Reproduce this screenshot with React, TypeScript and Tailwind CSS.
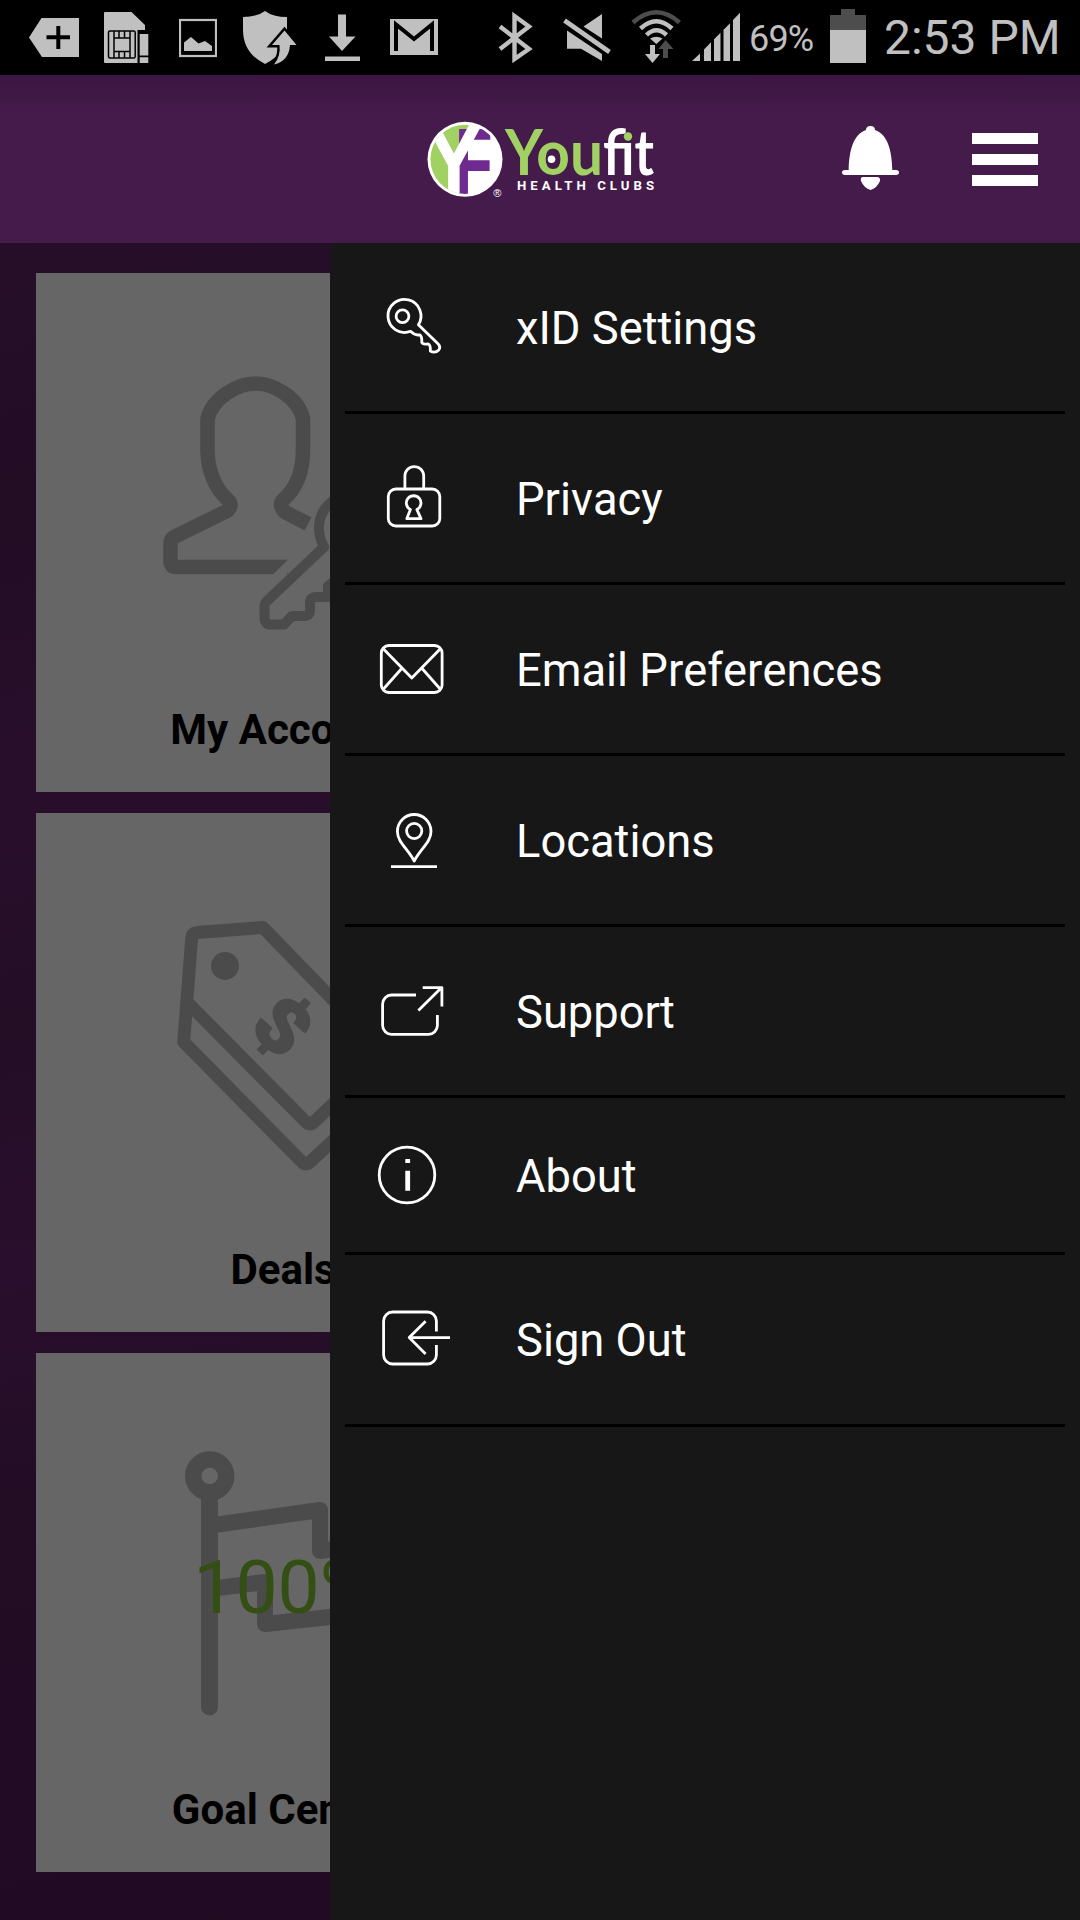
import type { ReactNode } from 'react';

type MenuItem = {
  label: string;
  viewBox: string;
  rowClass: string;
  icon: ReactNode;
};

const menuItems: MenuItem[] = [
  {
    label: 'xID Settings',
    viewBox: '375 243 85 168',
    rowClass: 'h-[171px]',
    icon: (
      <>
        <path d="M418.4 324.8 L438 343.8 Q441 347 438.800 350 Q435 353.800 430.300 351 Q430.800 344.500 428 343.800 Q423 344.800 421.800 342.500 Q422.300 336.500 419.500 334.800 Q415 335.800 410.500 331.300 A16.500 16.500 0 1 1 418.400 324.800 Z" />
        <circle cx="402.500" cy="316.300" r="6.400" />
      </>
    ),
  },
  {
    label: 'Privacy',
    viewBox: '375 414 85 168',
    rowClass: 'h-[171px]',
    icon: (
      <>
        <rect x="388.3" y="489" width="51.5" height="37" rx="7.5" />
        <path d="M404.9 489 V476 A9.4 9.4 0 0 1 423.7 476 V489" />
        <path d="M410.4 509.6 A7.3 7.3 0 1 1 416.9 509.6 L421 518.7 H406.8 Z" />
      </>
    ),
  },
  {
    label: 'Email Preferences',
    viewBox: '375 585 85 168',
    rowClass: 'h-[171px]',
    icon: (
      <>
        <rect x="381.3" y="645.5" width="60.8" height="47" rx="7.5" />
        <path d="M383 648.5 L411.8 678 L440.6 648.5 M383 689.5 L401.5 668.8 M440.6 689.5 L422.3 668.8" />
      </>
    ),
  },
  {
    label: 'Locations',
    viewBox: '375 756 85 168',
    rowClass: 'h-[171px]',
    icon: (
      <>
        <path d="M414.2 861 C408 849 397.4 842 397.4 831.5 A16.8 17 0 0 1 431 831.5 C431 842 420.4 849 414.2 861 Z" />
        <circle cx="414.2" cy="831" r="7.6" />
        <path d="M391 866.7 H437" />
      </>
    ),
  },
  {
    label: 'Support',
    viewBox: '375 927 85 168',
    rowClass: 'h-[171px]',
    icon: (
      <>
        <path d="M416 995 H391.5 A9 9 0 0 0 382.6 1004 V1025.5 A9 9 0 0 0 391.5 1034.4 H428.5 A9 9 0 0 0 437.4 1025.5 V1015" />
        <path d="M418.4 1010.6 L441.6 987.6 M422.7 987.6 H441.9 V1006.5" />
      </>
    ),
  },
  {
    label: 'About',
    viewBox: '375 1098 85 154',
    rowClass: 'h-[157px]',
    icon: (
      <>
        <circle cx="407" cy="1175" r="27.8" />
        <path d="M407.7 1159 V1163 M407.7 1170.8 V1190.8" strokeWidth="4.8" />
      </>
    ),
  },
  {
    label: 'Sign Out',
    viewBox: '375 1255 85 169',
    rowClass: 'h-[172px]',
    icon: (
      <>
        <path d="M436.4 1331.5 V1321 A9 9 0 0 0 427.5 1312 H392.5 A9 9 0 0 0 383.6 1321 V1355 A9 9 0 0 0 392.5 1364 H427.5 A9 9 0 0 0 436.4 1355 V1345" />
        <path d="M450 1337.6 H409 M425.6 1321.3 L409.2 1337.6 L425.6 1353.9" />
      </>
    ),
  },
];

function StatusBar() {
  return (
    <div className="flex h-[75px] items-center bg-black pl-7 text-[#c0c0c0]">
      {/* Notifications */}
      <svg className="h-[75px] w-[52px]" viewBox="28 0 52 75" fill="currentColor">
        <path d="M29 37.5 L41.5 18 H79 V57 H42 Z" />
        <path d="M46.5 37.3 H70 M58.3 26 V49" stroke="#000" strokeWidth="4" />
      </svg>
      <svg className="ml-6 h-[75px] w-[45px]" viewBox="104 0 45 75" fill="currentColor">
        <path d="M105 12 H131.5 L145 25 V30 H137.5 V63 H105 Q104 63 104 62 V13 Q104 12 105 12 Z" />
        <path d="M139.7 34 H148.3 V55.5 H139.7 Z M139.7 57.3 H148.3 V63 H139.7 Z" />
        <g fill="none" stroke="#000" strokeWidth="1.5">
          <rect x="108.5" y="31" width="26.7" height="27" rx="1.5" />
          <path d="M114 31 V58 M130 31 V58 M114 38 H130 M114 51.5 H130 M119 31 V38 M124.5 31 V38 M119 51.5 V58 M124.5 51.5 V58" />
        </g>
      </svg>
      <svg className="ml-[30px] h-[75px] w-[38px]" viewBox="179 0 38 75" fill="currentColor">
        <rect x="180" y="20" width="36" height="36" fill="none" stroke="currentColor" strokeWidth="2.2" />
        <path d="M184 51 V42.5 L191 37 L198.5 43.5 L205 41 L212 46 V51 Z" />
      </svg>
      <svg className="ml-[25px] h-[75px] w-[56px]" viewBox="242 0 56 75" fill="currentColor">
        <path d="M243 17 Q257 17 265 11 Q273 17 287 17 V30 Q287 53 265 64 Q243 53 243 30 Z" />
        <path
          d="M284.5 30.5 L296.5 45 H290 Q289 61 274 64.5 Q281 56 279.5 45 H272 Z"
          stroke="#000"
          strokeWidth="5"
        />
        <path d="M284.5 30.5 L296.5 45 H290 Q289 61 274 64.5 Q281 56 279.5 45 H272 Z" />
      </svg>
      <svg className="ml-[27px] h-[75px] w-[35px]" viewBox="325 0 35 75" fill="currentColor">
        <path d="M338 14.5 H346 V36.5 H355.5 L342 51 L329 36.5 H338 Z M325 56.5 H360 V61 H325 Z" />
      </svg>
      <svg className="ml-[30px] h-[75px] w-12" viewBox="390 0 48 75" fill="currentColor">
        <rect x="390" y="19" width="48" height="36" />
        <path d="M396 51 V24.5 L414 39 L432 24.5 V51" fill="none" stroke="#000" strokeWidth="4" />
      </svg>

      {/* System state */}
      <svg className="ml-[58px] h-[75px] w-[38px]" viewBox="496 0 38 75" fill="none" stroke="currentColor" strokeWidth="4.4">
        <path d="M500 26.5 L529 49 L514.5 59 V16 L529 26.5 L500 49" />
      </svg>
      <svg className="ml-[29px] h-[75px] w-12" viewBox="563 0 48 75" fill="currentColor">
        <path d="M583.5 26.5 L602 14 V38.5 Z M567 30.5 L602 54 V61 L581 48.7 H567 Z" />
        <path d="M564.5 20.5 L609.5 52" stroke="currentColor" strokeWidth="4.6" />
      </svg>
      <svg className="ml-5 h-[75px] w-[50px]" viewBox="631 0 50 75" fill="none" stroke="currentColor" strokeWidth="4.5">
        <path d="M633 22.5 Q656.3 2 679.5 22.5" stroke="#4d4d4d" />
        <path d="M640.5 28.5 Q656.3 14 672 28.5 M646.5 35 Q656.3 25.5 666.5 35" />
        <path d="M650 38.5 Q656.3 35 662.5 38.5 L656.3 44 Z" fill="currentColor" stroke="none" />
        <path d="M650 45 H655 V54 H660 L652.5 63 L645 54 H650 Z" fill="currentColor" stroke="none" />
        <path d="M663 58 H668 V49 H673.5 L665.5 40 L658.5 49 H663 Z" fill="#4d4d4d" stroke="none" />
      </svg>
      <svg className="ml-[11px] h-[75px] w-12" viewBox="692 0 48 75" fill="currentColor">
        <path d="M692 61 L700 53.5 V61 Z M704 61 V49.5 L711 42.3 V61 Z M714 61 V39.3 L720.5 32.8 V61 Z M723.5 61 V29.7 L730 23.2 V61 Z M733 61 V20 L740 12.8 V61 Z" />
      </svg>
      <span className="ml-[9px] w-[67px] pt-1 text-[36px] leading-[71px] tracking-[-0.8px]">69%</span>
      <svg className="ml-[14px] h-[75px] w-9" viewBox="830 0 36 75">
        <path d="M841 9 H855 V15 H866 V30 H830 V15 H841 Z" fill="#4d4d4d" />
        <rect x="830" y="30" width="36" height="33" fill="currentColor" />
      </svg>
      <span className="ml-[18px] whitespace-nowrap text-[48px] leading-[75px]">2:53 PM</span>
    </div>
  );
}

function Logo() {
  return (
    <svg className="h-20 w-[232px]" viewBox="426 119 232 80">
      <defs>
        <clipPath id="badge">
          <circle cx="465" cy="159.3" r="34.6" />
        </clipPath>
      </defs>
      <circle cx="465" cy="159.3" r="37.5" fill="#fff" />
      <g clipPath="url(#badge)" fontFamily="Liberation Sans, Arial, sans-serif">
        <path d="M426 120 H480 L456 165 V199 H426 Z" fill="#a1d063" />
        <text transform="translate(455 194.5) scale(.64 1)" fontSize="96" fontWeight="700" fill="#6f2a90">
          F
        </text>
        <text transform="translate(453.8 197) scale(.82 1)" fontSize="112" textAnchor="middle" fill="#fff" stroke="#fff" strokeWidth="3.5">
          Y
        </text>
      </g>
      <text x="497.4" y="197" fontSize="11" textAnchor="middle" fill="#fff" fontFamily="Liberation Sans, Arial, sans-serif">
        ®
      </text>
      <g fontFamily="Lato, sans-serif" fontSize="63" fontWeight="700">
        <text x="505" y="175" textLength="98" lengthAdjust="spacingAndGlyphs">
          <tspan fill="#a1d063">You</tspan>
        </text>
        <text x="603" y="175" textLength="51" lengthAdjust="spacingAndGlyphs" fill="#fff">
          fit
        </text>
      </g>
      <circle cx="551.5" cy="159.3" r="3.8" fill="#fff" />
      <circle cx="628" cy="136.5" r="4.2" fill="#a1d063" />
      <text
        x="517"
        y="190.3"
        fontSize="13.2"
        fontWeight="700"
        textLength="137"
        fill="#fff"
        fontFamily="Roboto, sans-serif"
      >
        HEALTH CLUBS
      </text>
    </svg>
  );
}

function Header() {
  return (
    <header className="flex h-[168px] items-center bg-linear-to-b from-[#3c1642] to-[#451b4b] to-25% pl-[426px]">
      <Logo />
      <button className="ml-[182px]">
        <svg className="h-[66px] w-[60px]" viewBox="840 126 60 66" fill="#fff">
          <path d="M866 130 Q866 126 870.5 126 Q875 126 875 130 C888 134 892 152 892.3 170 H896 Q899 170 899 172.6 Q899 175 896 175 H845 Q842 175 842 172.6 Q842 170 845 170 H848.7 C849 152 853 134 866 130 Z" />
          <path d="M863 177 H877 Q880.5 177 880 181 Q877 188 870.5 190 Q864 188 861 181 Q860 177 863 177 Z" />
        </svg>
      </button>
      <button className="ml-[72px] flex w-[66px] flex-col gap-[10px]">
        <span className="h-[11px] bg-white" />
        <span className="h-[11px] bg-white" />
        <span className="h-[11px] bg-white" />
      </button>
    </header>
  );
}

function Card({ title, viewBox, children }: { title: string; viewBox: string; children: ReactNode }) {
  return (
    <div className="flex h-[519px] w-[494px] flex-col items-center bg-[#666]">
      <svg
        className="h-[431px] w-full"
        viewBox={viewBox}
        fill="none"
        stroke="#4b4b4b"
        strokeLinejoin="round"
        preserveAspectRatio="xMidYMin meet"
      >
        {children}
      </svg>
      <h2 className="whitespace-nowrap text-[42px] font-bold leading-[52px] text-black">{title}</h2>
    </div>
  );
}

function Dashboard() {
  return (
    <div className="flex flex-1 flex-col gap-[21px] bg-[linear-gradient(170deg,#260e29_0%,#220d25_15%,#290e2c_30%,#230e26_42%,#2a0e2d_55%,#220d25_68%,#220c25_85%,#200b23_100%)] px-9 pt-[30px]">
      <Card title="My Account" viewBox="36 273 494 430">
        <path
          d="M308 524 L285 512 Q278 505 283 500 C297 488 303 470 303 450 V419 Q300 404 284 393 Q256 374 227 393 Q211 404 207.5 419 V450 C207.5 470 215 488 227 499 Q234 505 227 511 L174 537 Q170.5 539 170.5 544 V561 Q170.5 567 176 567 H288"
          strokeWidth="14.5"
        />
        <path d="M275 579 L299 555" stroke="#666" strokeWidth="9" />
        <path
          d="M324 547 L266 602 Q264.5 604 264.5 606 V618 Q265 624.5 271 624.5 H284 L292 616 H304 Q310 616 310 610 V603 Q310 597 316 597 H328 V586 L345 572 C362 580 390 560 390 532 C390 508 374 494 354 494 C330 494 309 518 324 547 Z"
          fill="#666"
          strokeWidth="10"
        />
      </Card>
      <Card title="Deals" viewBox="36 813 494 430">
        <g strokeWidth="12.8">
          <path d="M263 927.5 L197 932.5 Q192 933 191.7 938 L183.7 1042 L302 1162 Q306 1166 310 1162 L405 1074 Z" />
          <path d="M189 1004 L306 1122 Q310 1126 314 1122 L385 1055" />
        </g>
        <ellipse cx="225" cy="966" rx="14" ry="13.9" fill="#4b4b4b" stroke="none" />
        <text
          transform="translate(282.5 1026) rotate(42) scale(1.12 1)"
          y="26"
          textAnchor="middle"
          fontSize="74"
          fontWeight="900"
          fill="#4b4b4b"
          strokeWidth="2"
        >
          $
        </text>
      </Card>
      <Card title="Goal Center" viewBox="36 1353 494 430">
        <circle cx="209.7" cy="1476" r="16.5" strokeWidth="16.4" />
        <path d="M209.5 1494 V1707" strokeWidth="17" strokeLinecap="round" />
        <path
          d="M214 1525 L320 1510 V1551 L358 1546 V1614 L265 1624 V1582 L214 1588.5"
          strokeWidth="16"
        />
        <text x="284" y="1613" textAnchor="middle" fontSize="75" fill="#344f13" stroke="none">
          100%
        </text>
      </Card>
    </div>
  );
}

function Drawer() {
  return (
    <nav className="absolute bottom-0 right-0 top-[243px] w-[750px] bg-[#171717] px-[15px]">
      <ul>
        {menuItems.map((item) => (
          <li key={item.label} className={`${item.rowClass} border-b-3 border-black`}>
            <a href="#" className="flex h-full items-center pl-[30px]">
              <svg
                className="h-full w-[85px]"
                viewBox={item.viewBox}
                fill="none"
                stroke="#fff"
                strokeWidth="2.8"
                strokeLinejoin="round"
              >
                {item.icon}
              </svg>
              <span className="ml-14 whitespace-nowrap pt-[3px] text-[45.3px] leading-none text-white [font-kerning:none]">
                {item.label}
              </span>
            </a>
          </li>
        ))}
      </ul>
    </nav>
  );
}

export default function App() {
  return (
    <div className="relative flex h-[1920px] w-[1080px] flex-col overflow-hidden bg-[#230e26] font-[Roboto,sans-serif]">
      <StatusBar />
      <Header />
      <Dashboard />
      <Drawer />
    </div>
  );
}
